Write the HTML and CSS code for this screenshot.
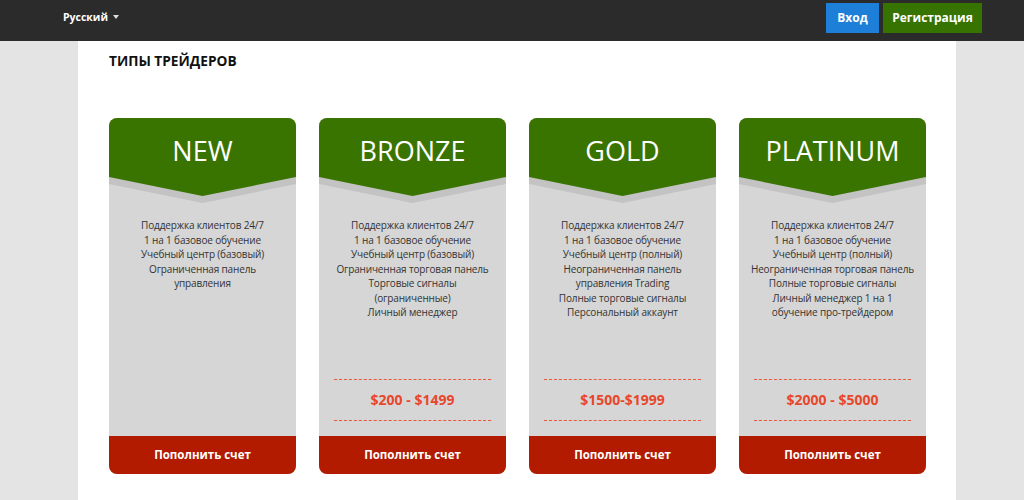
FILE: index.html
```html
<!DOCTYPE html>
<html lang="ru">
<head>
    <meta charset="UTF-8">
    <title>Типы трейдеров</title>
    <link rel="stylesheet" href="styles.css">
</head>
<body>
    <div class="topbar">
        <div class="lang">Русский <span class="caret"></span></div>
        <div class="auth">
            <a class="btn btn-login">Вход</a>
            <a class="btn btn-register">Регистрация</a>
        </div>
    </div>

    <div class="page">
        <h2 class="title">ТИПЫ ТРЕЙДЕРОВ</h2>

        <div class="plans">
            <div class="plan">
                <div class="plan-head">
                    <svg class="chevron" viewBox="0 0 187 86" preserveAspectRatio="none">
                        <polygon points="0,0 187,0 187,66 93.5,85 0,66" fill="#c3c3c3"/>
                        <polygon points="0,0 187,0 187,59 93.5,78 0,59" fill="#3a7400"/>
                    </svg>
                    <span class="plan-name">NEW</span>
                </div>
                <div class="features">
                    Поддержка клиентов 24/7<br>
                    1 на 1 базовое обучение<br>
                    Учебный центр (базовый)<br>
                    Ограниченная панель<br>управления
                </div>
                <a class="deposit">Пополнить счет</a>
            </div>

            <div class="plan">
                <div class="plan-head">
                    <svg class="chevron" viewBox="0 0 187 86" preserveAspectRatio="none">
                        <polygon points="0,0 187,0 187,66 93.5,85 0,66" fill="#c3c3c3"/>
                        <polygon points="0,0 187,0 187,59 93.5,78 0,59" fill="#3a7400"/>
                    </svg>
                    <span class="plan-name">BRONZE</span>
                </div>
                <div class="features">
                    Поддержка клиентов 24/7<br>
                    1 на 1 базовое обучение<br>
                    Учебный центр (базовый)<br>
                    Ограниченная торговая панель<br>
                    Торговые сигналы<br>
                    (ограниченные)<br>
                    Личный менеджер
                </div>
                <div class="price">$200 - $1499</div>
                <a class="deposit">Пополнить счет</a>
            </div>

            <div class="plan">
                <div class="plan-head">
                    <svg class="chevron" viewBox="0 0 187 86" preserveAspectRatio="none">
                        <polygon points="0,0 187,0 187,66 93.5,85 0,66" fill="#c3c3c3"/>
                        <polygon points="0,0 187,0 187,59 93.5,78 0,59" fill="#3a7400"/>
                    </svg>
                    <span class="plan-name">GOLD</span>
                </div>
                <div class="features">
                    Поддержка клиентов 24/7<br>
                    1 на 1 базовое обучение<br>
                    Учебный центр (полный)<br>
                    Неограниченная панель<br>
                    управления Trading<br>
                    Полные торговые сигналы<br>
                    Персональный аккаунт
                </div>
                <div class="price">$1500-$1999</div>
                <a class="deposit">Пополнить счет</a>
            </div>

            <div class="plan">
                <div class="plan-head">
                    <svg class="chevron" viewBox="0 0 187 86" preserveAspectRatio="none">
                        <polygon points="0,0 187,0 187,66 93.5,85 0,66" fill="#c3c3c3"/>
                        <polygon points="0,0 187,0 187,59 93.5,78 0,59" fill="#3a7400"/>
                    </svg>
                    <span class="plan-name">PLATINUM</span>
                </div>
                <div class="features">
                    Поддержка клиентов 24/7<br>
                    1 на 1 базовое обучение<br>
                    Учебный центр (полный)<br>
                    Неограниченная торговая панель<br>
                    Полные торговые сигналы<br>
                    Личный менеджер 1 на 1<br>
                    обучение про-трейдером
                </div>
                <div class="price">$2000 - $5000</div>
                <a class="deposit">Пополнить счет</a>
            </div>
        </div>
    </div>
</body>
</html>
```

FILE: styles.css
```css
* {
    margin: 0;
    padding: 0;
    box-sizing: border-box;
}

body {
    font-family: "Open Sans", "DejaVu Sans", sans-serif;
    background: #e4e4e4;
    color: #333;
    height: 500px;
    overflow: hidden;
}

/* Top bar */
.topbar {
    height: 41px;
    background: #2b2b2b;
    display: flex;
    align-items: center;
    justify-content: space-between;
    padding: 0 42px 0 63px;
}

.lang {
    color: white;
    font-size: 10.5px;
    font-weight: bold;
    display: flex;
    align-items: center;
    gap: 5px;
    margin-top: -7px;
}

.caret {
    width: 0;
    height: 0;
    border-left: 3.5px solid transparent;
    border-right: 3.5px solid transparent;
    border-top: 4px solid #ddd;
}

.auth {
    display: flex;
    gap: 4px;
    margin-top: -5px;
}

.btn {
    display: block;
    height: 30px;
    line-height: 30px;
    color: white;
    font-size: 12px;
    font-weight: bold;
    text-align: center;
}

.btn-login {
    width: 53px;
    background: #1e7fd8;
}

.btn-register {
    width: 99px;
    background: #367300;
}

/* Content */
.page {
    width: 878px;
    margin-left: 78px;
    background: white;
    height: 459px;
    padding: 10px 31px 0;
}

.title {
    font-size: 13.7px;
    font-weight: bold;
    color: #111;
    line-height: 20px;
    margin-bottom: 47px;
}

.plans {
    display: grid;
    grid-template-columns: repeat(4, 187px);
    gap: 23px;
}

.plan {
    height: 356px;
    background: #d6d6d6;
    border-radius: 8px;
    overflow: hidden;
    display: flex;
    flex-direction: column;
}

.plan-head {
    position: relative;
    height: 85px;
    flex-shrink: 0;
}

.chevron {
    position: absolute;
    top: 0;
    left: 0;
    width: 100%;
    height: 86px;
    display: block;
}

.plan-name {
    position: relative;
    display: block;
    color: white;
    font-size: 27px;
    line-height: 30px;
    padding-top: 18px;
    text-align: center;
}

.features {
    flex: 1;
    padding: 15px 4px 0;
    font-size: 10px;
    letter-spacing: -0.15px;
    line-height: 14.5px;
    text-align: center;
    color: #333;
}

.price {
    margin: 0 15px 15px;
    height: 42px;
    line-height: 40px;
    border-top: 1px dashed #f0553a;
    border-bottom: 1px dashed #f0553a;
    color: #e8472c;
    font-size: 14px;
    font-weight: bold;
    text-align: center;
}

.deposit {
    display: block;
    height: 38px;
    line-height: 38px;
    flex-shrink: 0;
    background: #b21b00;
    color: white;
    font-size: 11.5px;
    font-weight: bold;
    text-align: center;
}
```
